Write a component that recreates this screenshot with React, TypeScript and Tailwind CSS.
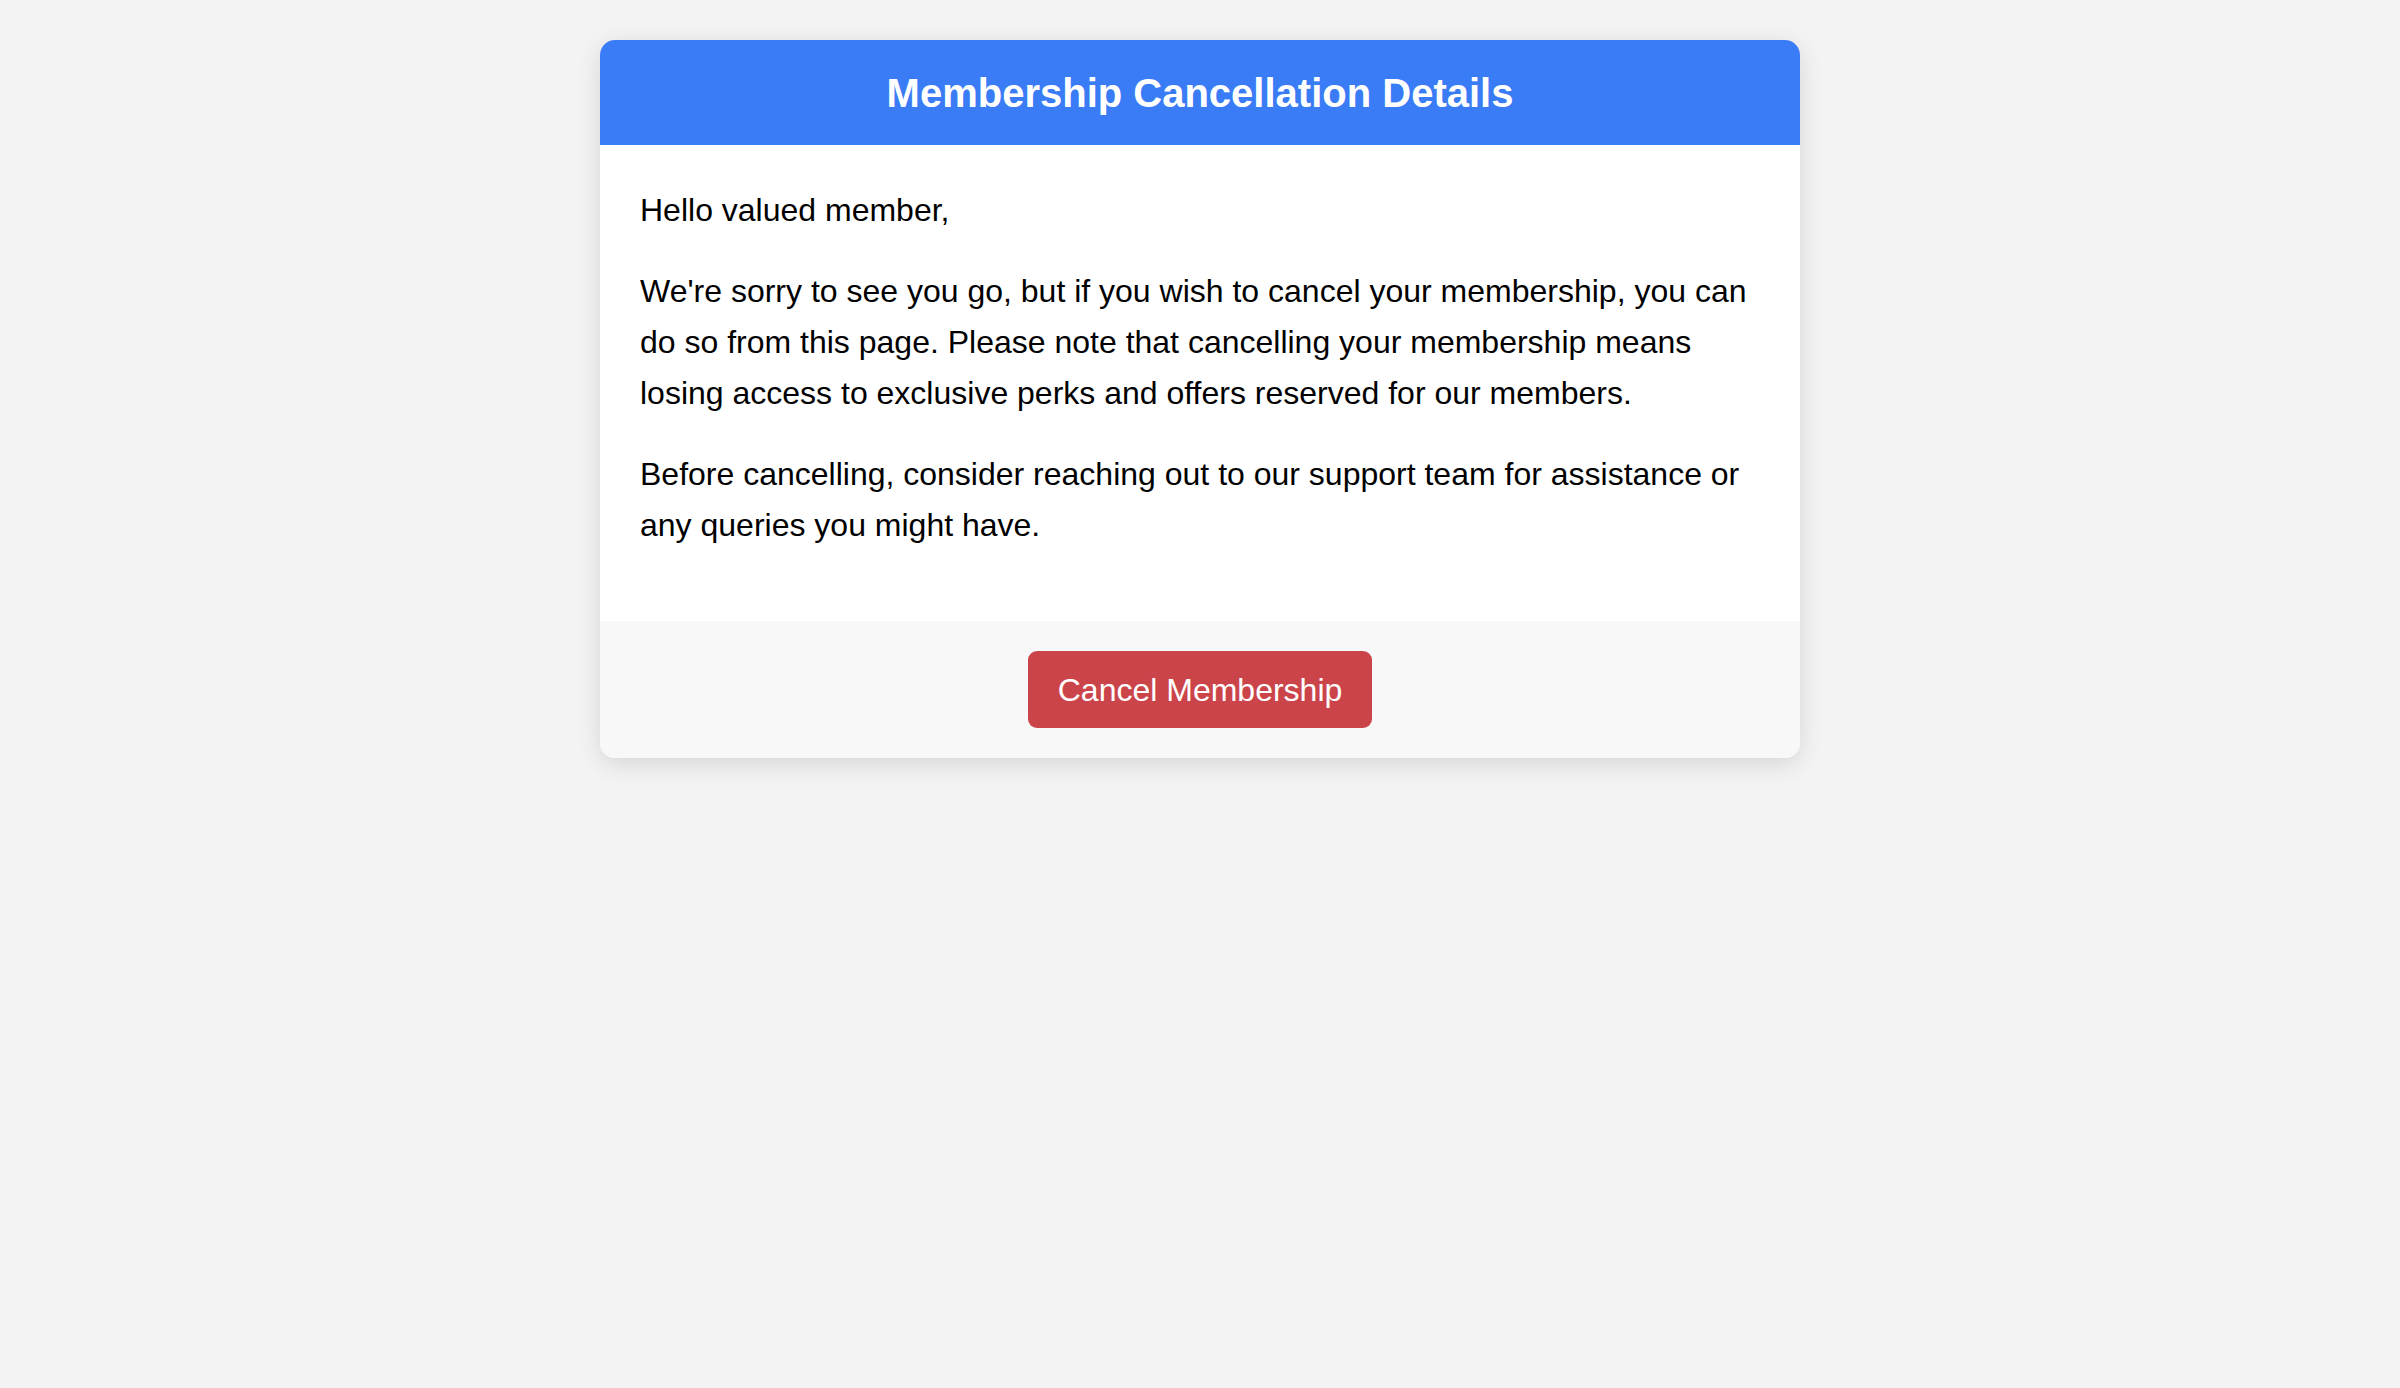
import React from 'react';

const App = () => {
  return (
    <div className="min-h-screen bg-[#f3f3f3] pt-10" style={{ fontFamily: '"Liberation Sans", Arial, sans-serif' }}>
      {/* Card */}
      <div className="mx-auto w-[1200px] overflow-hidden rounded-[15px] bg-white shadow-[0_6px_24px_rgba(0,0,0,0.12)]">
        {/* Header */}
        <div className="flex h-[105px] items-center justify-center bg-[#3a7bf6]">
          <h2 className="text-[40px] font-bold text-white">Membership Cancellation Details</h2>
        </div>

        {/* Body */}
        <div className="px-10 pt-10 pb-10 text-[32px] leading-[51px] text-black">
          <p className="mb-[30px]">Hello valued member,</p>
          <p className="mb-[30px]">
            We're sorry to see you go, but if you wish to cancel your membership, you can do so from this page. Please
            note that cancelling your membership means losing access to exclusive perks and offers reserved for our
            members.
          </p>
          <p className="mb-[30px]">
            Before cancelling, consider reaching out to our support team for assistance or any queries you might have.
          </p>
        </div>

        {/* Footer */}
        <div className="flex justify-center bg-[#f8f8f8] pt-[30px] pb-[30px]">
          <button className="h-[77px] rounded-[9px] bg-[#cb444a] px-[30px] text-[32px] text-white">
            Cancel Membership
          </button>
        </div>
      </div>
    </div>
  );
};

export default App;
